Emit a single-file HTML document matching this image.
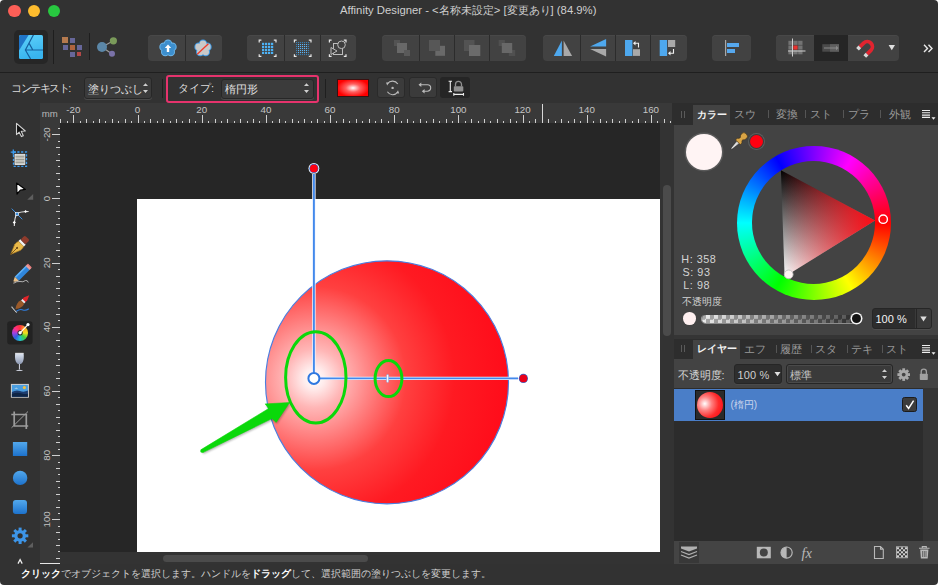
<!DOCTYPE html>
<html><head><meta charset="utf-8">
<style>
*{box-sizing:border-box;margin:0;padding:0}
html,body{width:938px;height:585px;overflow:hidden;background:#fff}
body{font-family:"Liberation Sans",sans-serif;color:#ddd;position:relative}
.a{position:absolute}
#win{position:absolute;left:0;top:0;width:938px;height:585px;background:#323232;border-radius:4px;overflow:hidden}
.grp{position:absolute;top:35px;height:26px;background:#424242;border-radius:4px;box-shadow:inset 0 1px 0 #484848}
.dv{position:absolute;top:0;width:1px;height:26px;background:#2c2c2c}
.txt{position:absolute;white-space:nowrap;line-height:1}
.tab{position:absolute;top:0;height:20px;font-size:11px;line-height:21px;color:#9a9a9a;white-space:nowrap}
.tsep{position:absolute;top:6px;width:1px;height:10px;background:#5a5a5a}
</style></head><body>
<div id="win">
  <!-- title -->
  <div class="a" style="left:8px;top:4.8px;width:12.6px;height:12.6px;border-radius:50%;background:#fc5f57"></div>
  <div class="a" style="left:27.5px;top:4.8px;width:12.6px;height:12.6px;border-radius:50%;background:#fdbc2e"></div>
  <div class="a" style="left:47.7px;top:4.8px;width:12.6px;height:12.6px;border-radius:50%;background:#28c840"></div>
  <div class="txt" style="left:340px;top:4.5px;font-size:11.3px;color:#cfcfcf">Affinity Designer - &lt;名称未設定&gt; [変更あり] (84.9%)</div>


  <!-- toolbar -->
  <div class="a" style="left:14px;top:30px;width:34px;height:34px;border-radius:5px;background:#262626"></div>
  <svg class="a" style="left:19px;top:35px" width="24" height="24" viewBox="0 0 24 24">
    <defs><linearGradient id="lg1" x1="0" y1="0" x2="0.3" y2="1"><stop offset="0" stop-color="#5fd2fa"/><stop offset="1" stop-color="#38b4ee"/></linearGradient></defs>
    <rect x="0" y="0" width="24" height="24" rx="1.5" fill="url(#lg1)"/>
    <path d="M1.5 0 H9.6 L0 15.6 V1.5 Z" fill="#1f74c6"/>
    <path d="M14.6 -0.5 L6.4 15 L11.6 24 M6.4 15 H24 M10.3 8.6 L13.8 15" stroke="#16609e" stroke-width="1.2" fill="none"/>
  </svg>
  <div class="a" style="left:53px;top:30px;width:1px;height:34px;background:#1e1e1e"></div>
  <svg class="a" style="left:62px;top:37px" width="21" height="21" viewBox="0 0 21 21">
    <rect x="0" y="0" width="6" height="6" fill="#b57a4f"/>
    <rect x="8" y="1" width="5" height="5" fill="#67679a"/>
    <rect x="1" y="8" width="5" height="5" fill="#67679a"/>
    <rect x="8" y="8" width="5" height="5" fill="#b0643f"/>
    <rect x="15" y="8" width="5" height="5" fill="#67679a"/>
    <rect x="8" y="15" width="5" height="5" fill="#67679a"/>
    <rect x="15" y="15" width="4" height="4" fill="#b24848"/>
  </svg>
  <div class="a" style="left:89px;top:33px;width:1px;height:27px;background:#1e1e1e"></div>
  <svg class="a" style="left:96px;top:36px" width="22" height="22" viewBox="0 0 22 22">
    <path d="M6 11 L17 5 M6 11 L16 18" stroke="#9a9a9a" stroke-width="1.2"/>
    <circle cx="6" cy="11" r="5" fill="#5b87a8"/>
    <circle cx="17.4" cy="4.8" r="3.6" fill="#7a9a5a"/>
    <circle cx="16" cy="17.7" r="3" fill="#7a72a8"/>
  </svg>

  <div class="grp" style="left:148px;width:74px"><div class="dv" style="left:37px"></div></div>
  <div class="grp" style="left:247px;width:109px"><div class="dv" style="left:37px"></div><div class="dv" style="left:73px"></div></div>
  <div class="grp" style="left:382px;width:144px"><div class="dv" style="left:37px"></div><div class="dv" style="left:72px"></div><div class="dv" style="left:107px"></div></div>
  <div class="grp" style="left:543px;width:144px"><div class="dv" style="left:37px"></div><div class="dv" style="left:72px"></div><div class="dv" style="left:107px"></div></div>
  <div class="grp" style="left:712px;width:39px"></div>
  <div class="grp" style="left:776px;width:123px"><div class="a" style="left:38px;top:0;width:34px;height:26px;background:#252525"></div></div>
<svg class="a" style="left:0;top:0" width="938" height="72" viewBox="0 0 938 72"><circle cx="168.00" cy="43.70" r="4.3" fill="#6cb6ea"/><circle cx="172.37" cy="46.88" r="4.3" fill="#6cb6ea"/><circle cx="170.70" cy="52.02" r="4.3" fill="#6cb6ea"/><circle cx="165.30" cy="52.02" r="4.3" fill="#6cb6ea"/><circle cx="163.63" cy="46.88" r="4.3" fill="#6cb6ea"/><circle cx="168" cy="48.3" r="5" fill="#6cb6ea"/><circle cx="168.00" cy="43.70" r="3.3" fill="#3d8fce"/><circle cx="172.37" cy="46.88" r="3.3" fill="#3d8fce"/><circle cx="170.70" cy="52.02" r="3.3" fill="#3d8fce"/><circle cx="165.30" cy="52.02" r="3.3" fill="#3d8fce"/><circle cx="163.63" cy="46.88" r="3.3" fill="#3d8fce"/><circle cx="168" cy="48.3" r="5" fill="#3d8fce"/><path d="M168 44.5 L171.2 48 H169.2 V52 H166.8 V48 H164.8 Z" fill="#fff"/><circle cx="203.00" cy="43.70" r="4.3" fill="#3d9ae6"/><circle cx="207.37" cy="46.88" r="4.3" fill="#3d9ae6"/><circle cx="205.70" cy="52.02" r="4.3" fill="#3d9ae6"/><circle cx="200.30" cy="52.02" r="4.3" fill="#3d9ae6"/><circle cx="198.63" cy="46.88" r="4.3" fill="#3d9ae6"/><circle cx="203" cy="48.3" r="5" fill="#3d9ae6"/><circle cx="203.00" cy="43.70" r="3.3" fill="#c9c9c9"/><circle cx="207.37" cy="46.88" r="3.3" fill="#c9c9c9"/><circle cx="205.70" cy="52.02" r="3.3" fill="#c9c9c9"/><circle cx="200.30" cy="52.02" r="3.3" fill="#c9c9c9"/><circle cx="198.63" cy="46.88" r="3.3" fill="#c9c9c9"/><circle cx="203" cy="48.3" r="5" fill="#c9c9c9"/><path d="M197.2 54.2 L208.4 43.8" stroke="#f03a2a" stroke-width="1.3"/><path d="M259.2 42.4 V40.2 H261.4 M273.8 40.2 H276 V42.4 M276 54.2 V56.4 H273.8 M261.4 56.4 H259.2 V54.2" stroke="#e6e6e6" stroke-width="1.2" fill="none"/><rect x="262" y="42.8" width="2.2" height="2.2" fill="#4db2f5"/><rect x="262" y="45.8" width="2.2" height="2.2" fill="#4db2f5"/><rect x="262" y="48.8" width="2.2" height="2.2" fill="#4db2f5"/><rect x="262" y="51.8" width="2.2" height="2.2" fill="#4db2f5"/><rect x="265" y="42.8" width="2.2" height="2.2" fill="#4db2f5"/><rect x="265" y="45.8" width="2.2" height="2.2" fill="#4db2f5"/><rect x="265" y="48.8" width="2.2" height="2.2" fill="#4db2f5"/><rect x="265" y="51.8" width="2.2" height="2.2" fill="#4db2f5"/><rect x="268" y="42.8" width="2.2" height="2.2" fill="#4db2f5"/><rect x="268" y="45.8" width="2.2" height="2.2" fill="#4db2f5"/><rect x="268" y="48.8" width="2.2" height="2.2" fill="#4db2f5"/><rect x="268" y="51.8" width="2.2" height="2.2" fill="#4db2f5"/><rect x="271" y="42.8" width="2.2" height="2.2" fill="#4db2f5"/><rect x="271" y="45.8" width="2.2" height="2.2" fill="#4db2f5"/><rect x="271" y="48.8" width="2.2" height="2.2" fill="#4db2f5"/><rect x="271" y="51.8" width="2.2" height="2.2" fill="#4db2f5"/><rect x="296" y="42" width="1.1" height="1.1" fill="#3a7eb0"/><rect x="296" y="44" width="1.1" height="1.1" fill="#3a7eb0"/><rect x="296" y="46" width="1.1" height="1.1" fill="#3a7eb0"/><rect x="296" y="48" width="1.1" height="1.1" fill="#3a7eb0"/><rect x="296" y="50" width="1.1" height="1.1" fill="#3a7eb0"/><rect x="296" y="52" width="1.1" height="1.1" fill="#3a7eb0"/><rect x="296" y="54" width="1.1" height="1.1" fill="#3a7eb0"/><rect x="298" y="42" width="1.1" height="1.1" fill="#3a7eb0"/><rect x="298" y="44" width="1.1" height="1.1" fill="#5cb4f4"/><rect x="298" y="46" width="1.1" height="1.1" fill="#5cb4f4"/><rect x="298" y="48" width="1.1" height="1.1" fill="#5cb4f4"/><rect x="298" y="50" width="1.1" height="1.1" fill="#5cb4f4"/><rect x="298" y="52" width="1.1" height="1.1" fill="#5cb4f4"/><rect x="298" y="54" width="1.1" height="1.1" fill="#3a7eb0"/><rect x="300" y="42" width="1.1" height="1.1" fill="#3a7eb0"/><rect x="300" y="44" width="1.1" height="1.1" fill="#5cb4f4"/><rect x="300" y="46" width="1.1" height="1.1" fill="#5cb4f4"/><rect x="300" y="48" width="1.1" height="1.1" fill="#5cb4f4"/><rect x="300" y="50" width="1.1" height="1.1" fill="#5cb4f4"/><rect x="300" y="52" width="1.1" height="1.1" fill="#5cb4f4"/><rect x="300" y="54" width="1.1" height="1.1" fill="#3a7eb0"/><rect x="302" y="42" width="1.1" height="1.1" fill="#3a7eb0"/><rect x="302" y="44" width="1.1" height="1.1" fill="#5cb4f4"/><rect x="302" y="46" width="1.1" height="1.1" fill="#5cb4f4"/><rect x="302" y="48" width="1.1" height="1.1" fill="#5cb4f4"/><rect x="302" y="50" width="1.1" height="1.1" fill="#5cb4f4"/><rect x="302" y="52" width="1.1" height="1.1" fill="#5cb4f4"/><rect x="302" y="54" width="1.1" height="1.1" fill="#3a7eb0"/><rect x="304" y="42" width="1.1" height="1.1" fill="#3a7eb0"/><rect x="304" y="44" width="1.1" height="1.1" fill="#5cb4f4"/><rect x="304" y="46" width="1.1" height="1.1" fill="#5cb4f4"/><rect x="304" y="48" width="1.1" height="1.1" fill="#5cb4f4"/><rect x="304" y="50" width="1.1" height="1.1" fill="#5cb4f4"/><rect x="304" y="52" width="1.1" height="1.1" fill="#5cb4f4"/><rect x="304" y="54" width="1.1" height="1.1" fill="#3a7eb0"/><rect x="306" y="42" width="1.1" height="1.1" fill="#3a7eb0"/><rect x="306" y="44" width="1.1" height="1.1" fill="#5cb4f4"/><rect x="306" y="46" width="1.1" height="1.1" fill="#5cb4f4"/><rect x="306" y="48" width="1.1" height="1.1" fill="#5cb4f4"/><rect x="306" y="50" width="1.1" height="1.1" fill="#5cb4f4"/><rect x="306" y="52" width="1.1" height="1.1" fill="#5cb4f4"/><rect x="306" y="54" width="1.1" height="1.1" fill="#3a7eb0"/><rect x="308" y="42" width="1.1" height="1.1" fill="#3a7eb0"/><rect x="308" y="44" width="1.1" height="1.1" fill="#3a7eb0"/><rect x="308" y="46" width="1.1" height="1.1" fill="#3a7eb0"/><rect x="308" y="48" width="1.1" height="1.1" fill="#3a7eb0"/><rect x="308" y="50" width="1.1" height="1.1" fill="#3a7eb0"/><rect x="308" y="52" width="1.1" height="1.1" fill="#3a7eb0"/><rect x="308" y="54" width="1.1" height="1.1" fill="#3a7eb0"/><path d="M294.4 42.4 V40.2 H296.6 M308.8 40.2 H311 V42.4 M311 54.2 V56.4 H308.8 M296.6 56.4 H294.4 V54.2" stroke="#e6e6e6" stroke-width="1.2" fill="none"/><path d="M329.4 42.4 V40.2 H331.6 M343.8 40.2 H346 V42.4 M346 54.2 V56.4 H343.8 M331.6 56.4 H329.4 V54.2" stroke="#e6e6e6" stroke-width="1.2" fill="none"/><g stroke="#bdbdbd" stroke-width="1" fill="none"><rect x="333.5" y="43.5" width="9" height="11"/><circle cx="341.5" cy="44.8" r="3.8" fill="#3e3e3e"/><path d="M331 47.5 V54.5 L337 51 Z" fill="#3e3e3e"/></g><rect x="394" y="40" width="6" height="6" fill="#535353"/><rect x="397" y="43" width="10" height="10" fill="#686868"/><rect x="404" y="50" width="6" height="6" fill="#5a5a5a"/><rect x="435.3" y="45.8" width="9.7" height="10" fill="#696969"/><rect x="429" y="40" width="11" height="11" fill="#575757"/><rect x="464" y="40" width="10.5" height="11" fill="#535353"/><rect x="469" y="45" width="11.3" height="11" fill="#6b6b6b"/><rect x="498.7" y="40" width="6.2" height="6" fill="#505050"/><rect x="508.8" y="50" width="6.4" height="6" fill="#505050"/><rect x="501.8" y="43" width="10.4" height="10" fill="#686868"/><path d="M553.8 55.9 H561.9 V40.4 Z" fill="#4ea8ee"/><path d="M563.6 40.4 V55.9 H572.1 Z" fill="#a9a9a9"/><path d="M590.1 46.6 L606.1 38.9 V46.6 Z" fill="#4ea8ee"/><path d="M590.1 48.9 H606.1 V56.6 Z" fill="#a9a9a9"/><rect x="625" y="40" width="7.4" height="16" fill="#4ea8ee"/><rect x="633" y="49.2" width="7" height="6.7" fill="#a9a9a9"/><path d="M638.5 47.5 V43.3 H634.5" stroke="#f0f0f0" stroke-width="1.1" fill="none"/><path d="M633 43.3 L635.5 41 V45.6 Z" fill="#f0f0f0"/><rect x="659.7" y="40" width="7.4" height="16" fill="#4ea8ee"/><rect x="668" y="40" width="7.2" height="7" fill="#a9a9a9"/><path d="M673.5 49 V53.3 H669.5" stroke="#f0f0f0" stroke-width="1.1" fill="none"/><path d="M668 53.3 L670.5 51 V55.6 Z" fill="#f0f0f0"/><rect x="725" y="40" width="1.2" height="16" fill="#a8a8a8"/><rect x="727" y="43" width="12" height="4" fill="#56a8ee"/><rect x="727" y="49" width="8" height="4" fill="#56a8ee"/><rect x="788.4" y="40.8" width="4.3" height="4.1" fill="#737373"/><rect x="788.4" y="45.5" width="4.3" height="4.1" fill="#737373"/><rect x="788.4" y="50.2" width="4.3" height="4.1" fill="#737373"/><rect x="793.3" y="40.8" width="4.3" height="4.1" fill="#737373"/><rect x="793.3" y="45.5" width="4.3" height="4.1" fill="#e8322e"/><rect x="793.3" y="50.2" width="4.3" height="4.1" fill="#737373"/><rect x="798.2" y="40.8" width="4.3" height="4.1" fill="#737373"/><rect x="798.2" y="45.5" width="4.3" height="4.1" fill="#737373"/><rect x="798.2" y="50.2" width="4.3" height="4.1" fill="#737373"/><rect x="792" y="38.5" width="1" height="18" fill="#cfcfcf"/><rect x="788" y="50.5" width="17.5" height="1" fill="#cfcfcf"/><rect x="822.3" y="44.2" width="16.7" height="7.5" fill="#4a4a4a"/><rect x="830" y="44.2" width="9" height="7.5" fill="#5e5e5e"/><path d="M824 48 H836" stroke="#8a8a8a" stroke-width="1"/><path d="M836 45.8 L838.5 48 L836 50.2 Z" fill="#8a8a8a"/><g transform="translate(866.5 47.5) rotate(45) scale(1.08)"><path d="M-6.5 4 V-1 A6.5 6.5 0 0 1 6.5 -1 V4 H3 V-1 A3 3 0 0 0 -3 -1 V4 Z" fill="#e2242f"/><rect x="-6.5" y="4" width="3.5" height="3" fill="#d8d8d8"/><rect x="3" y="4" width="3.5" height="3" fill="#d8d8d8"/></g><path d="M888.6 45 H895 L891.8 50.3 Z" fill="#e0e0e0"/><path d="M924 44.8 L927.5 48.4 L924 52 M928.5 44.8 L932 48.4 L928.5 52" stroke="#e8e8e8" stroke-width="1.4" fill="none"/></svg>
  <!-- toolbar bottom line -->
  <div class="a" style="left:0;top:72px;width:938px;height:1px;background:#1f1f1f"></div>


  <!-- context bar -->
  <div class="txt" style="left:11px;top:83px;font-size:11px;letter-spacing:-1.45px;color:#dcdcdc">コンテキスト:</div>
  <div class="a" style="left:84px;top:77px;width:68px;height:21.5px;background:#3b3b3b;border:1px solid #272727;border-radius:3px;box-shadow:0 1px 0 #4a4a4a"></div>
  <div class="txt" style="left:88px;top:83.5px;font-size:10.6px;color:#e4e4e4">塗りつぶし</div>
  <svg class="a" style="left:141px;top:80px" width="10" height="16"><path d="M2 6 H7 L4.5 3.3 Z M2 10 H7 L4.5 12.9 Z" fill="#cfcfcf"/></svg>
  <div class="a" style="left:162px;top:79px;width:1px;height:19px;background:#1f1f1f"></div>
  <div class="a" style="left:166px;top:75px;width:153px;height:27.5px;border:2.6px solid #e6336d;border-radius:3px"></div>
  <div class="txt" style="left:178px;top:83px;font-size:11px;color:#dcdcdc">タイプ:</div>
  <div class="a" style="left:220.5px;top:78.5px;width:93px;height:20.5px;background:#3b3b3b;border:1px solid #272727;border-radius:3px;box-shadow:0 1px 0 #4a4a4a"></div>
  <div class="txt" style="left:225px;top:84px;font-size:10.5px;color:#e4e4e4">楕円形</div>
  <svg class="a" style="left:302px;top:80px" width="10" height="16"><path d="M2 6 H7 L4.5 3.3 Z M2 10 H7 L4.5 12.9 Z" fill="#cfcfcf"/></svg>
  <div class="a" style="left:324.5px;top:79px;width:1px;height:19px;background:#1f1f1f"></div>
  <div class="a" style="left:336.5px;top:78.6px;width:32.5px;height:18.3px;border:1px solid #3a1010;background:radial-gradient(ellipse 16px 9px at 50% 50%, #fff 0%, #ff6060 45%, #ff0000 100%)"></div>
  <div class="a" style="left:376.7px;top:77.4px;width:28.7px;height:21px;background:#3b3b3b;border:1px solid #2a2a2a;border-radius:3px"></div>
  <div class="a" style="left:408.8px;top:77.4px;width:28.2px;height:21px;background:#3b3b3b;border:1px solid #2a2a2a;border-radius:3px"></div>
  <div class="a" style="left:440px;top:77.4px;width:29.9px;height:21px;background:#252525;border-radius:3px"></div>
  <svg class="a" style="left:370px;top:74px" width="110" height="28" viewBox="370 74 110 28">
    <circle cx="392.6" cy="87.9" r="1.2" fill="#bbb"/>
    <path d="M387.5 83.6 A6.3 6.3 0 0 1 397.8 84" stroke="#bbb" stroke-width="1.1" fill="none"/>
    <path d="M397.7 92.2 A6.3 6.3 0 0 1 387.4 91.8" stroke="#bbb" stroke-width="1.1" fill="none"/>
    <path d="M386 82.4 L389 82.6 L387.2 85.6 Z M399.2 93.4 L396.2 93.2 L398 90.2 Z" fill="#bbb"/>
    <path d="M419.5 84.8 H427.5 A3.2 3.2 0 0 1 427.5 91.2 H423" stroke="#bbb" stroke-width="1.1" fill="none"/>
    <path d="M418.5 84.8 L421.3 82.5 V87.1 Z M421.8 91.2 L424.6 88.9 V93.5 Z" fill="#bbb"/>
    <path d="M450.3 81.3 V91.6 M448.6 81.3 H452 M448.6 91.6 H452" stroke="#eee" stroke-width="1.1" fill="none"/>
    <path d="M455.5 86.5 V84.3 A3 3 0 0 1 461.5 84.3 V86.5" stroke="#8f8f8f" stroke-width="1.3" fill="none"/>
    <rect x="453.8" y="86.3" width="9.5" height="5.3" rx="0.8" fill="#8f8f8f"/>
    <path d="M453.8 94.4 H463.5 M453.8 93 V95.8 M463.5 93 V95.8" stroke="#eee" stroke-width="1.1" fill="none"/>
  </svg>

  <!-- canvas area -->
  <div class="a" style="left:60px;top:123px;width:600px;height:429px;background:#262626"></div>

  <!-- artboard + drawing -->
  <svg class="a" style="left:60px;top:123px" width="600" height="429" viewBox="60 123 600 429">
    <defs>
      <radialGradient id="rg" gradientUnits="userSpaceOnUse" cx="313.9" cy="378.4" r="209.5">
        <stop offset="0" stop-color="#ffffff"/>
        <stop offset="0.05" stop-color="#ffecec"/>
        <stop offset="0.14" stop-color="#ffb6b6"/>
        <stop offset="0.3" stop-color="#ff7676"/>
        <stop offset="0.44" stop-color="#ff4040"/>
        <stop offset="0.67" stop-color="#ff1a22"/>
        <stop offset="1" stop-color="#ff0818"/>
      </radialGradient>
    </defs>
    <rect x="137" y="199" width="523" height="353" fill="#fff"/>
    <circle cx="387" cy="382.3" r="121.5" fill="url(#rg)" stroke="#4a7ee0" stroke-width="1.15"/>
    <path d="M313.9 174 V372.5 M320 378.4 H518" stroke="#f0f4ff" stroke-width="3.4"/>
    <path d="M313.9 174 V372.5 M320 378.4 H518" stroke="#4289ec" stroke-width="1.9"/>
    <circle cx="313.9" cy="378.4" r="5.5" fill="#fff" stroke="#2f78e0" stroke-width="2"/>
    <circle cx="313.9" cy="168.4" r="5.4" fill="#fff"/>
    <circle cx="313.9" cy="168.4" r="4.6" fill="#2a6fd8"/>
    <circle cx="313.9" cy="168.4" r="3.9" fill="#ff0012"/>
    <circle cx="523.4" cy="378.4" r="5.4" fill="#fff"/>
    <circle cx="523.4" cy="378.4" r="4.6" fill="#2a6fd8"/>
    <circle cx="523.4" cy="378.4" r="3.9" fill="#e8001a"/>
    <rect x="386.6" y="374.4" width="2" height="8" rx="1" fill="#fff" stroke="#7aa8e8" stroke-width="0.6"/>
    <ellipse cx="315.8" cy="377.4" rx="30.2" ry="45.6" fill="none" stroke="#0ad80a" stroke-width="3"/>
    <ellipse cx="388.5" cy="378.6" rx="13.4" ry="18" fill="none" stroke="#0ad80a" stroke-width="3"/>
    <filter id="sh" x="-20%" y="-20%" width="140%" height="140%"><feGaussianBlur stdDeviation="1"/></filter>
    <g opacity="0.3" filter="url(#sh)" transform="translate(0.8 1.4)"><path d="M201.2 449.6 L268.7 408.5 L265.2 403.9 L289.6 402.6 L276.2 422.4 L272 418.5 L202.8 452.6 Z" fill="#000"/></g>
    <path d="M201.2 449.6 L268.7 408.5 L265.2 403.9 L289.6 402.6 L276.2 422.4 L272 418.5 L202.8 452.6 Z" fill="#0ad80a" stroke="#0ad80a" stroke-width="0.6" stroke-linejoin="round"/>
    <circle cx="202" cy="451.1" r="1.75" fill="#0ad80a"/>
  </svg>

  <!-- rulers -->
  <div class="a" style="left:40px;top:103px;width:632px;height:20px;background:#393939"></div>
  <div class="a" style="left:40px;top:103px;width:20px;height:461px;background:#393939"></div>
<svg class="a" style="left:0;top:0" width="938" height="585" viewBox="0 0 938 585"><path d="M60.5 119 V123 M67.5 121 V123 M73.5 115 V123 M80.5 121 V123 M86.5 119 V123 M93.5 121 V123 M99.5 119 V123 M105.5 121 V123 M112.5 119 V123 M118.5 121 V123 M125.5 119 V123 M131.5 121 V123 M138.5 115 V123 M144.5 121 V123 M150.5 119 V123 M157.5 121 V123 M163.5 119 V123 M170.5 121 V123 M176.5 119 V123 M182.5 121 V123 M189.5 119 V123 M195.5 121 V123 M202.5 115 V123 M208.5 121 V123 M215.5 119 V123 M221.5 121 V123 M227.5 119 V123 M234.5 121 V123 M240.5 119 V123 M247.5 121 V123 M253.5 119 V123 M259.5 121 V123 M266.5 115 V123 M272.5 121 V123 M279.5 119 V123 M285.5 121 V123 M292.5 119 V123 M298.5 121 V123 M304.5 119 V123 M311.5 121 V123 M317.5 119 V123 M324.5 121 V123 M330.5 115 V123 M336.5 121 V123 M343.5 119 V123 M349.5 121 V123 M356.5 119 V123 M362.5 121 V123 M369.5 119 V123 M375.5 121 V123 M381.5 119 V123 M388.5 121 V123 M394.5 115 V123 M401.5 121 V123 M407.5 119 V123 M413.5 121 V123 M420.5 119 V123 M426.5 121 V123 M433.5 119 V123 M439.5 121 V123 M446.5 119 V123 M452.5 121 V123 M458.5 115 V123 M465.5 121 V123 M471.5 119 V123 M478.5 121 V123 M484.5 119 V123 M490.5 121 V123 M497.5 119 V123 M503.5 121 V123 M510.5 119 V123 M516.5 121 V123 M523.5 115 V123 M529.5 121 V123 M535.5 119 V123 M542.5 121 V123 M548.5 119 V123 M555.5 121 V123 M561.5 119 V123 M568.5 121 V123 M574.5 119 V123 M580.5 121 V123 M587.5 115 V123 M593.5 121 V123 M600.5 119 V123 M606.5 121 V123 M612.5 119 V123 M619.5 121 V123 M625.5 119 V123 M632.5 121 V123 M638.5 119 V123 M645.5 121 V123 M651.5 115 V123 M657.5 121 V123 M664.5 119 V123 M670.5 121 V123 " stroke="#cfcfcf" stroke-width="1"/><text x="73.3" y="113.3" font-size="9.8" fill="#c4c4c4" text-anchor="middle" font-family="Liberation Sans">-20</text><text x="137.5" y="113.3" font-size="9.8" fill="#c4c4c4" text-anchor="middle" font-family="Liberation Sans">0</text><text x="201.7" y="113.3" font-size="9.8" fill="#c4c4c4" text-anchor="middle" font-family="Liberation Sans">20</text><text x="265.9" y="113.3" font-size="9.8" fill="#c4c4c4" text-anchor="middle" font-family="Liberation Sans">40</text><text x="330.0" y="113.3" font-size="9.8" fill="#c4c4c4" text-anchor="middle" font-family="Liberation Sans">60</text><text x="394.2" y="113.3" font-size="9.8" fill="#c4c4c4" text-anchor="middle" font-family="Liberation Sans">80</text><text x="458.4" y="113.3" font-size="9.8" fill="#c4c4c4" text-anchor="middle" font-family="Liberation Sans">100</text><text x="522.6" y="113.3" font-size="9.8" fill="#c4c4c4" text-anchor="middle" font-family="Liberation Sans">120</text><text x="586.8" y="113.3" font-size="9.8" fill="#c4c4c4" text-anchor="middle" font-family="Liberation Sans">140</text><text x="650.9" y="113.3" font-size="9.8" fill="#c4c4c4" text-anchor="middle" font-family="Liberation Sans">160</text><text x="41.8" y="116.8" font-size="9.6" fill="#b8b8b8" font-family="Liberation Sans">mm</text><path d="M58 128.5 H60 M52 134.5 H60 M58 141.5 H60 M56 147.5 H60 M58 154.5 H60 M56 160.5 H60 M58 166.5 H60 M56 173.5 H60 M58 179.5 H60 M56 186.5 H60 M58 192.5 H60 M52 198.5 H60 M58 205.5 H60 M56 211.5 H60 M58 218.5 H60 M56 224.5 H60 M58 231.5 H60 M56 237.5 H60 M58 243.5 H60 M56 250.5 H60 M58 256.5 H60 M52 263.5 H60 M58 269.5 H60 M56 276.5 H60 M58 282.5 H60 M56 288.5 H60 M58 295.5 H60 M56 301.5 H60 M58 308.5 H60 M56 314.5 H60 M58 320.5 H60 M52 327.5 H60 M58 333.5 H60 M56 340.5 H60 M58 346.5 H60 M56 353.5 H60 M58 359.5 H60 M56 365.5 H60 M58 372.5 H60 M56 378.5 H60 M58 385.5 H60 M52 391.5 H60 M58 397.5 H60 M56 404.5 H60 M58 410.5 H60 M56 417.5 H60 M58 423.5 H60 M56 430.5 H60 M58 436.5 H60 M56 442.5 H60 M58 449.5 H60 M52 455.5 H60 M58 462.5 H60 M56 468.5 H60 M58 474.5 H60 M56 481.5 H60 M58 487.5 H60 M56 494.5 H60 M58 500.5 H60 M56 507.5 H60 M58 513.5 H60 M52 519.5 H60 M58 526.5 H60 M56 532.5 H60 M58 539.5 H60 M56 545.5 H60 M58 551.5 H60 M56 558.5 H60 " stroke="#cfcfcf" stroke-width="1"/><text transform="translate(49.9 134.3) rotate(-90)" x="0" y="0" font-size="9.8" fill="#c4c4c4" text-anchor="middle" font-family="Liberation Sans">-20</text><text transform="translate(49.9 198.5) rotate(-90)" x="0" y="0" font-size="9.8" fill="#c4c4c4" text-anchor="middle" font-family="Liberation Sans">0</text><text transform="translate(49.9 262.7) rotate(-90)" x="0" y="0" font-size="9.8" fill="#c4c4c4" text-anchor="middle" font-family="Liberation Sans">20</text><text transform="translate(49.9 326.9) rotate(-90)" x="0" y="0" font-size="9.8" fill="#c4c4c4" text-anchor="middle" font-family="Liberation Sans">40</text><text transform="translate(49.9 391.0) rotate(-90)" x="0" y="0" font-size="9.8" fill="#c4c4c4" text-anchor="middle" font-family="Liberation Sans">60</text><text transform="translate(49.9 455.2) rotate(-90)" x="0" y="0" font-size="9.8" fill="#c4c4c4" text-anchor="middle" font-family="Liberation Sans">80</text><text transform="translate(49.9 519.4) rotate(-90)" x="0" y="0" font-size="9.8" fill="#c4c4c4" text-anchor="middle" font-family="Liberation Sans">100</text><path d="M542.5 104 V123" stroke="#d8d8d8" stroke-width="1"/></svg>
  <!-- scrollbars -->
  <div class="a" style="left:660px;top:123px;width:14px;height:441px;background:#333"></div>
  <div class="a" style="left:60px;top:552px;width:614px;height:12px;background:#333"></div>


  <div class="a" style="left:663.4px;top:184.6px;width:7.4px;height:151px;border-radius:4px;background:#4b4b4b"></div>
  <div class="a" style="left:163px;top:555.2px;width:204.8px;height:7px;border-radius:4px;background:#4b4b4b"></div>
  <div class="a" style="left:40px;top:563px;width:20px;height:1px;background:#e6e6e6"></div>

  <!-- right panel -->
  <div class="a" style="left:674px;top:104px;width:264px;height:460px;background:#353535"></div>
  <div class="a" style="left:674px;top:124px;width:264px;height:211px;background:#434343"></div>
  <div class="a" style="left:674px;top:358px;width:264px;height:30px;background:#434343"></div>
  <div class="a" style="left:674px;top:388px;width:249px;height:153px;background:#2c2c2c"></div>
  <div class="a" style="left:674px;top:541px;width:264px;height:23px;background:#444"></div>

  <!-- tools -->
<svg class="a" style="left:0;top:104px" width="40" height="481" viewBox="0 104 40 481"><defs><linearGradient id="bl" x1="0" y1="0" x2="0" y2="1"><stop offset="0" stop-color="#52a8ec"/><stop offset="1" stop-color="#1d72cc"/></linearGradient><linearGradient id="gl" x1="0" y1="0" x2="0" y2="1"><stop offset="0" stop-color="#dfe6f2"/><stop offset="1" stop-color="#8a96b0"/></linearGradient></defs><path d="M16.5 123.3 V134.6 L19.2 132.2 L21.4 136.6 L23.3 135.7 L21.2 131.3 L25.3 131 Z" fill="#111" stroke="#d0d0d0" stroke-width="1.1" stroke-linejoin="round"/><rect x="13.5" y="152" width="13" height="14.3" fill="none" stroke="#3d9cf0" stroke-width="1.3" stroke-dasharray="2.2 1.6"/><path d="M13.3 149.6 V154.8 M10.7 152.2 H15.9" stroke="#3d9cf0" stroke-width="1.3"/><rect x="15" y="154.3" width="9.8" height="10.2" fill="#c9c9c2" stroke="#efefef" stroke-width="0.8"/><path d="M15.5 156.8 H24.3 M15.5 159.6 H24.3 M15.5 162.3 H24.3" stroke="#8f8f88" stroke-width="0.9"/><path d="M16.6 183 L25.4 189.4 L20.4 190.2 L17 194 Z" fill="#fff" stroke="#000" stroke-width="1.2" stroke-linejoin="round"/><path d="M27.2 199.7 L33.2 194 V199.7 Z" fill="#5e5e5e"/><path d="M11.7 208.6 L22.3 219.3" stroke="#3d8fe0" stroke-width="1"/><path d="M17 213.9 Q19 211.6 28.6 211.5 M17 213.9 Q14.5 217 14.3 226" stroke="#e6e6e6" stroke-width="1.1" fill="none"/><rect x="15.4" y="212.3" width="3.2" height="3.2" fill="#3d8fe0" stroke="#fff" stroke-width="0.6"/><path d="M25.6 209.9 L27 211.5 L25.6 213.1 L24.2 211.5 Z M14.3 220.8 L15.9 222.4 L14.3 224 L12.7 222.4 Z" fill="#fff"/><g transform="translate(19.8 245.2) rotate(45)"><path d="M0 13 L-4.2 3 Q-4.6 0 -3.6 -2 H3.6 Q4.6 0 4.2 3 Z" fill="#e9b94a" stroke="#a37520" stroke-width="0.6"/><path d="M0 13 V4" stroke="#5a3a10" stroke-width="0.7"/><circle cx="0" cy="3.8" r="1" fill="#5a3a10"/><rect x="-3.8" y="-4.5" width="7.6" height="2.5" fill="#f2f2f2"/><rect x="-3.4" y="-10.5" width="6.8" height="6" rx="1.5" fill="#8e3b2c"/></g><g transform="translate(20 275.5) rotate(45)"><rect x="-2.8" y="-11" width="5.6" height="15.5" fill="#2f86dc"/><rect x="-2.8" y="-11" width="1.6" height="15.5" fill="#5fb0f4"/><rect x="-2.8" y="-13" width="5.6" height="2.3" fill="#e8a0a0"/><rect x="-2.8" y="-14" width="5.6" height="1.4" rx="0.7" fill="#f08080"/><path d="M-2.8 4.5 L0 10 L2.8 4.5 Z" fill="#e8c089"/><path d="M-0.9 8.2 L0 10 L0.9 8.2 Z" fill="#333"/></g><path d="M13.5 283.3 Q17 281 20 281.5 Q23 282.5 25.5 280.5 Q27.5 280 28.3 282.5" stroke="#bdbdbd" stroke-width="0.9" fill="none"/><g transform="translate(21.5 303) rotate(45)"><path d="M0 -11 L2.2 -6 V-3 H-2.2 V-6 Z" fill="#e0242a"/><rect x="-2.2" y="-3.5" width="4.4" height="2" fill="#eee"/><path d="M-2.4 -1.5 H2.4 Q4.2 3 0 8.5 Q-4.2 3 -2.4 -1.5 Z" fill="#9a5a2a"/></g><path d="M11.6 306.7 L16.7 312.5" stroke="#e8e8e8" stroke-width="1.1"/><path d="M12.2 306.5 L16.3 311.2" stroke="#222" stroke-width="0.6"/><path d="M16.5 311.2 Q20 308.5 23 310 Q26 311 28.8 308.8" stroke="#2f7fe0" stroke-width="1.1" fill="none"/><rect x="7.2" y="321.2" width="25.4" height="23.4" rx="3" fill="#222"/></svg><div class="a" style="left:12.2px;top:324.9px;width:15.8px;height:15.8px;border-radius:50%;background:conic-gradient(from 0deg,#ff3040,#ffb020,#f0e020,#40d040,#20c0d0,#3060e0,#a040e0,#ff3080,#ff3040)"></div><svg class="a" style="left:0;top:104px" width="40" height="481" viewBox="0 104 40 481"><circle cx="20.1" cy="332.8" r="2.6" fill="#222"/><path d="M20.1 332.8 L28 324.6" stroke="#fff" stroke-width="1.2"/><circle cx="20.1" cy="332.8" r="1.7" fill="#fff"/><circle cx="28" cy="324.6" r="1.6" fill="#fff"/><path d="M15.2 353.2 H23.6 Q24.3 359 22.8 362 Q21.5 364.3 19.4 364.3 Q17.3 364.3 16 362 Q14.5 359 15.2 353.2 Z" fill="url(#gl)"/><path d="M15.2 353.3 H23.6" stroke="#f4f4f4" stroke-width="0.8"/><rect x="18.9" y="364" width="1.1" height="5.5" fill="#c8ccd8"/><path d="M15.6 371 Q19.4 368.3 23.2 371 Z" fill="#c8ccd8"/><rect x="10.9" y="383.9" width="18" height="13.8" fill="#d0d0d0"/><rect x="11.9" y="384.9" width="16" height="11.8" fill="#4a9ee0"/><path d="M11.9 392 Q16 389.5 20 391 Q24 392.5 27.9 390.5 V396.7 H11.9 Z" fill="#1d3d70"/><path d="M11.9 394 Q17 392 22 393.5 Q25 394.5 27.9 393.5 V396.7 H11.9 Z" fill="#0f2545"/><circle cx="24.4" cy="387.6" r="1.6" fill="#f5c040"/><path d="M14.5 389 Q16 387 18 388.5 H14.5 Z" fill="#f0f0f0"/><path d="M14.2 411.5 V426 H28.2 M11.3 414.5 H26.3 V429" stroke="#9c9c9c" stroke-width="1.7" fill="none"/><path d="M11.5 427.8 L28 411.5" stroke="#9c9c9c" stroke-width="1"/><rect x="12.9" y="442" width="14.3" height="14" fill="url(#bl)"/><circle cx="20.1" cy="477.9" r="7.2" fill="url(#bl)"/><rect x="12.9" y="500.1" width="14.1" height="13.9" rx="3" fill="url(#bl)"/><g transform="translate(20.1 535.8)"><rect x="-1.5" y="-8.2" width="3" height="4" transform="rotate(0)" fill="#3d95e8"/><rect x="-1.5" y="-8.2" width="3" height="4" transform="rotate(45)" fill="#3d95e8"/><rect x="-1.5" y="-8.2" width="3" height="4" transform="rotate(90)" fill="#3d95e8"/><rect x="-1.5" y="-8.2" width="3" height="4" transform="rotate(135)" fill="#3d95e8"/><rect x="-1.5" y="-8.2" width="3" height="4" transform="rotate(180)" fill="#3d95e8"/><rect x="-1.5" y="-8.2" width="3" height="4" transform="rotate(225)" fill="#3d95e8"/><rect x="-1.5" y="-8.2" width="3" height="4" transform="rotate(270)" fill="#3d95e8"/><rect x="-1.5" y="-8.2" width="3" height="4" transform="rotate(315)" fill="#3d95e8"/><circle r="5.9" fill="#3d95e8"/><circle r="2.6" fill="#303030"/></g><path d="M27.4 547.6 L33 542.2 V547.6 Z" fill="#5e5e5e"/><path d="M18 563.6 L20.1 559.6 L22.2 563.6" stroke="#eee" stroke-width="1.2" fill="none"/></svg>

  <!-- right panel: color -->
  <div class="a" style="left:672px;top:103px;width:266px;height:21.5px;background:#2d2d2d"></div>
  <div class="a" style="left:693px;top:105px;width:37px;height:19.5px;background:#434343"></div>
  <div class="a" style="left:681px;top:110.5px;width:1px;height:7px;background:#5a5a5a"></div>
  <div class="a" style="left:684px;top:110.5px;width:1px;height:7px;background:#5a5a5a"></div>
  <div class="txt" style="left:696.5px;top:109.5px;font-size:10.3px;color:#f2f2f2;font-weight:bold">カラー</div>
  <div class="txt" style="left:734px;top:109px;font-size:10.8px;color:#9a9a9a">スウ</div>
  <div class="a" style="left:767.5px;top:110px;width:1px;height:8px;background:#555"></div>
  <div class="txt" style="left:776px;top:109px;font-size:10.8px;color:#9a9a9a">変換</div>
  <div class="a" style="left:805px;top:110px;width:1px;height:8px;background:#555"></div>
  <div class="txt" style="left:809.5px;top:109px;font-size:10.8px;color:#9a9a9a">スト</div>
  <div class="a" style="left:843px;top:110px;width:1px;height:8px;background:#555"></div>
  <div class="txt" style="left:848px;top:109px;font-size:10.8px;color:#9a9a9a">プラ</div>
  <div class="a" style="left:880px;top:110px;width:1px;height:8px;background:#555"></div>
  <div class="txt" style="left:889px;top:109px;font-size:10.8px;color:#9a9a9a">外観</div>
  <svg class="a" style="left:920px;top:108px" width="18" height="14"><path d="M2 2.5 H10 M2 4.8 H10 M2 7.1 H10 M2 9.4 H10" stroke="#eee" stroke-width="1.1"/><path d="M11.5 9.2 H15.5 L13.5 11.8 Z" fill="#eee"/></svg>

  <div class="a" style="left:686px;top:133.5px;width:36px;height:36px;border-radius:50%;background:#fff4f4;box-shadow:0 0 0 1.5px #5a5a5a"></div>
  <div class="a" style="left:749.9px;top:134.7px;width:13px;height:13px;border-radius:50%;background:#ff0010;box-shadow:0 0 0 1px #3c3c3c,0 0 0 2px #5c5f5f"></div>
  <svg class="a" style="left:726px;top:129px" width="24" height="24" viewBox="726 129 24 24">
    <defs><linearGradient id="tube" x1="0" y1="0" x2="1" y2="0"><stop offset="0" stop-color="#8a8a8a"/><stop offset="0.5" stop-color="#e8e8e8"/><stop offset="1" stop-color="#9a9a9a"/></linearGradient></defs>
    <g transform="translate(739.2 141) rotate(45)">
      <path d="M-0.7 11 L-2 1.5 H2 L0.7 11 Z" fill="url(#tube)" stroke="#262626" stroke-width="0.5"/>
      <path d="M-3.3 1.8 H3.3 V-0.6 Q1.6 -1.6 1.6 -3.3 Q3.4 -4.5 3.4 -7.2 Q3.4 -10 0 -10 Q-3.4 -10 -3.4 -7.2 Q-3.4 -4.5 -1.6 -3.3 Q-1.6 -1.6 -3.3 -0.6 Z" fill="#d9a445" stroke="#3a2a10" stroke-width="0.5"/>
    </g>
  </svg>

  <div class="a" style="left:736.5px;top:145.5px;width:154px;height:154px;border-radius:50%;background:conic-gradient(from 90deg,#ff0000,#ffff00,#00ff00,#00ffff,#0000ff,#ff00ff,#ff0000)"></div>
  <div class="a" style="left:752px;top:161px;width:123px;height:123px;border-radius:50%;background:#434343"></div>
  <svg class="a" style="left:674px;top:124px" width="264" height="211" viewBox="674 124 264 211">
    <defs>
      <linearGradient id="tbw" gradientUnits="userSpaceOnUse" x1="780.9" y1="170.3" x2="784.6" y2="276.8">
        <stop offset="0" stop-color="#000"/><stop offset="1" stop-color="#fff"/>
      </linearGradient>
      <linearGradient id="tred" gradientUnits="userSpaceOnUse" x1="875.0" y1="220.4" x2="782.8" y2="223.6">
        <stop offset="0" stop-color="#ff0a14" stop-opacity="1"/><stop offset="1" stop-color="#ff0a14" stop-opacity="0"/>
      </linearGradient>
    </defs>
    <path d="M875.0 220.4 L780.9 170.3 L784.6 276.8 Z" fill="url(#tbw)"/>
    <path d="M875.0 220.4 L780.9 170.3 L784.6 276.8 Z" fill="url(#tred)"/>
    <circle cx="788.7" cy="274.4" r="4.4" fill="#fff4f4" stroke="#bbb" stroke-width="0.8"/>
    <circle cx="883.2" cy="219.2" r="4.2" fill="#ff0a14" stroke="#fff" stroke-width="1.4"/>
  </svg>
  <div class="txt" style="left:681.3px;top:254px;font-size:10.8px;letter-spacing:0.55px;color:#d4d4d4">H: 358</div>
  <div class="txt" style="left:682.5px;top:267px;font-size:10.8px;letter-spacing:0.55px;color:#d4d4d4">S: 93</div>
  <div class="txt" style="left:683.3px;top:280px;font-size:10.8px;letter-spacing:0.55px;color:#d4d4d4">L: 98</div>
  <div class="txt" style="left:682px;top:297px;font-size:10px;color:#d4d4d4">不透明度</div>
  <div class="a" style="left:683px;top:312.3px;width:12.6px;height:12.6px;border-radius:50%;background:#fff0f0"></div>
  <div class="a" style="left:702.3px;top:314.6px;width:158.6px;height:8.6px;border-radius:4.3px;overflow:hidden;box-shadow:0 1px 0 #8c8c8c, -1px 0 0 #9a9a9a;background:repeating-conic-gradient(#4c4c4c 0 25%,#2a2a2a 0 50%) 0 0/8px 8.6px">
    <div class="a" style="left:0;top:0;width:100%;height:100%;background:repeating-conic-gradient(#ececec 0 25%,#a8a8a8 0 50%) 0 0/8px 8.6px;-webkit-mask-image:linear-gradient(90deg,#000,rgba(0,0,0,0.55) 45%,transparent)"></div></div>
  <div class="a" style="left:851.8px;top:313.9px;width:9.4px;height:9.4px;border-radius:50%;background:#111;box-shadow:0 0 0 1.5px #f4f4f4"></div>
  <div class="a" style="left:872.3px;top:308px;width:60px;height:21px;background:linear-gradient(90deg,#2d2d2d 0,#2d2d2d 72%,#3a3a3a 72%);border:1px solid #262626;border-radius:3px;box-shadow:0 1px 0 #4e4e4e"></div>
  <div class="a" style="left:915.5px;top:309px;width:1px;height:19px;background:#262626"></div>
  <div class="txt" style="left:875.5px;top:313.5px;font-size:11px;color:#f4f4f4">100 %</div>
  <svg class="a" style="left:918px;top:314px" width="12" height="10"><path d="M2.3 2.5 H8.7 L5.5 7.5 Z" fill="#dcdcdc"/></svg>


  <!-- right panel: layers -->
  <div class="a" style="left:674px;top:338.5px;width:264px;height:20.3px;background:#2d2d2d"></div>
  <div class="a" style="left:693px;top:339.5px;width:47px;height:19.3px;background:#434343"></div>
  <div class="a" style="left:681px;top:345px;width:1px;height:7px;background:#5a5a5a"></div>
  <div class="a" style="left:684px;top:345px;width:1px;height:7px;background:#5a5a5a"></div>
  <div class="txt" style="left:696.5px;top:344px;font-size:10.3px;color:#f2f2f2;font-weight:bold">レイヤー</div>
  <div class="txt" style="left:744px;top:343.5px;font-size:10.8px;color:#9a9a9a">エフ</div>
  <div class="a" style="left:775.5px;top:344.5px;width:1px;height:8px;background:#555"></div>
  <div class="txt" style="left:780px;top:343.5px;font-size:10.8px;color:#9a9a9a">履歴</div>
  <div class="a" style="left:810.5px;top:344.5px;width:1px;height:8px;background:#555"></div>
  <div class="txt" style="left:815px;top:343.5px;font-size:10.8px;color:#9a9a9a">スタ</div>
  <div class="a" style="left:846.5px;top:344.5px;width:1px;height:8px;background:#555"></div>
  <div class="txt" style="left:851px;top:343.5px;font-size:10.8px;color:#9a9a9a">テキ</div>
  <div class="a" style="left:881.5px;top:344.5px;width:1px;height:8px;background:#555"></div>
  <div class="txt" style="left:885.5px;top:343.5px;font-size:10.8px;color:#9a9a9a">スト</div>
  <svg class="a" style="left:920px;top:342.5px" width="18" height="14"><path d="M2 2.5 H10 M2 4.8 H10 M2 7.1 H10 M2 9.4 H10" stroke="#eee" stroke-width="1.1"/><path d="M11.5 9.2 H15.5 L13.5 11.8 Z" fill="#eee"/></svg>

  <div class="txt" style="left:677.5px;top:369.5px;font-size:10.8px;color:#d4d4d4">不透明度:</div>
  <div class="a" style="left:734.3px;top:364.1px;width:48px;height:20.3px;background:#2e2e2e;border:1px solid #262626;border-radius:3px;box-shadow:0 1px 0 #4a4a4a"></div>
  <div class="txt" style="left:737.5px;top:369.5px;font-size:11px;letter-spacing:0.15px;color:#cfcfcf">100 %</div>
  <svg class="a" style="left:772.5px;top:369.5px" width="10" height="10"><path d="M1.5 2 H7.5 L4.5 6.3 Z" fill="#e0e0e0"/></svg>
  <div class="a" style="left:785.7px;top:364.1px;width:107.7px;height:20.3px;background:#3a3a3a;border:1px solid #262626;border-radius:3px;box-shadow:inset 0 0 0 1px #4a4a4a"></div>
  <div class="txt" style="left:790px;top:369.5px;font-size:10.5px;color:#c4c4c4">標準</div>
  <svg class="a" style="left:880px;top:366px" width="10" height="16"><path d="M2 6 H7 L4.5 3.3 Z M2 10 H7 L4.5 12.9 Z" fill="#cfcfcf"/></svg>
  <svg class="a" style="left:894px;top:366px" width="44" height="18" viewBox="894 366 44 18">
    <g transform="translate(903.7 374.6)">
      <rect x="-1.4" y="-6.3" width="2.8" height="12.6" fill="#a8a8a8"/>
      <rect x="-1.4" y="-6.3" width="2.8" height="12.6" fill="#a8a8a8" transform="rotate(45)"/>
      <rect x="-1.4" y="-6.3" width="2.8" height="12.6" fill="#a8a8a8" transform="rotate(90)"/>
      <rect x="-1.4" y="-6.3" width="2.8" height="12.6" fill="#a8a8a8" transform="rotate(135)"/>
      <circle r="4.6" fill="#a8a8a8"/><circle r="1.9" fill="#434343"/>
    </g>
    <path d="M921.2 374 V371.8 A2.6 2.6 0 0 1 926.4 371.8 V374" stroke="#a0a0a0" stroke-width="1.3" fill="none"/>
    <rect x="919.8" y="373.7" width="8" height="6.3" rx="0.8" fill="#a0a0a0"/>
  </svg>

  <div class="a" style="left:674.3px;top:388.7px;width:248.7px;height:32px;background:#4a7ec8"></div>
  <div class="a" style="left:695px;top:390px;width:30px;height:29.6px;background:#2b2b2b;border:1px solid #111"></div>
  <div class="a" style="left:696.8px;top:391.6px;width:26.5px;height:26.5px;border-radius:50%;background:radial-gradient(circle at 30% 45%,#fff 0%,#ff8080 30%,#ff2a2a 60%,#ff0010 100%)"></div>
  <div class="txt" style="left:730.5px;top:399.5px;font-size:10px;color:#c8d4ec">(楕円)</div>
  <div class="a" style="left:902px;top:397.3px;width:15px;height:14.5px;background:#3c3c3c;border:1px solid #1c1c1c;border-radius:2.5px"></div>
  <svg class="a" style="left:902px;top:397px" width="16" height="16"><path d="M4.2 8.2 L6.6 11.4 L11.6 3.6" stroke="#fff" stroke-width="1.5" fill="none"/></svg>

  <div class="a" style="left:678.6px;top:541.5px;width:20.8px;height:21.5px;background:#383838"></div>
  <svg class="a" style="left:674px;top:541px" width="264" height="23" viewBox="674 541 264 23">
    <path d="M681 546.6 H697 V548.6 L689 551.6 L681 548.6 Z" fill="#b0b0b0"/><path d="M681 551.5 L689 554.5 L697 551.5 M681 555 L689 558 L697 555" stroke="#b0b0b0" stroke-width="1.2" fill="none"/>
    <rect x="756.8" y="546.8" width="14" height="11.5" fill="#b8b8b8"/><circle cx="763.8" cy="552.5" r="4" fill="#444"/>
    <circle cx="786.6" cy="552.6" r="5.6" fill="none" stroke="#b8b8b8" stroke-width="1.2"/>
    <path d="M786.6 547 A5.6 5.6 0 0 0 786.6 558.2 Z" fill="#b8b8b8"/>
    <text x="801.5" y="557.5" font-size="14.5" font-style="italic" fill="#b8b8b8" font-family="Liberation Serif">fx</text>
    <path d="M874.5 546.5 H880.5 L883.3 549.3 V558.5 H874.5 Z M880.5 546.5 V549.3 H883.3" stroke="#b8b8b8" stroke-width="1.1" fill="none"/>
    <rect x="896.5" y="546.8" width="11" height="11" fill="#3a3a3a" stroke="#c8c8c8" stroke-width="0.8"/><rect x="897.0" y="547.3" width="2" height="2" fill="#d0d0d0"/><rect x="897.0" y="551.3" width="2" height="2" fill="#d0d0d0"/><rect x="897.0" y="555.3" width="2" height="2" fill="#d0d0d0"/><rect x="899.0" y="549.3" width="2" height="2" fill="#d0d0d0"/><rect x="899.0" y="553.3" width="2" height="2" fill="#d0d0d0"/><rect x="901.0" y="547.3" width="2" height="2" fill="#d0d0d0"/><rect x="901.0" y="551.3" width="2" height="2" fill="#d0d0d0"/><rect x="901.0" y="555.3" width="2" height="2" fill="#d0d0d0"/><rect x="903.0" y="549.3" width="2" height="2" fill="#d0d0d0"/><rect x="903.0" y="553.3" width="2" height="2" fill="#d0d0d0"/><rect x="905.0" y="547.3" width="2" height="2" fill="#d0d0d0"/><rect x="905.0" y="551.3" width="2" height="2" fill="#d0d0d0"/><rect x="905.0" y="555.3" width="2" height="2" fill="#d0d0d0"/><path d="M919 548.3 H929.6 M922.3 548.3 V546.6 H926.3 V548.3" stroke="#b8b8b8" stroke-width="1.1" fill="none"/><path d="M920.2 549.5 H928.4 L927.7 558.5 H920.9 Z" fill="#b8b8b8"/><path d="M922.6 551 V557 M924.3 551 V557 M926 551 V557" stroke="#444" stroke-width="0.7"/>
  </svg>

  <!-- status bar text -->
  <div class="txt" style="left:21px;top:569px;font-size:10px;color:#cfcfcf"><b style="color:#fff">クリック</b>でオブジェクトを選択します。ハンドルを<b style="color:#fff">ドラッグ</b>して、選択範囲の塗りつぶしを変更します。</div>
</div>
</body></html>
